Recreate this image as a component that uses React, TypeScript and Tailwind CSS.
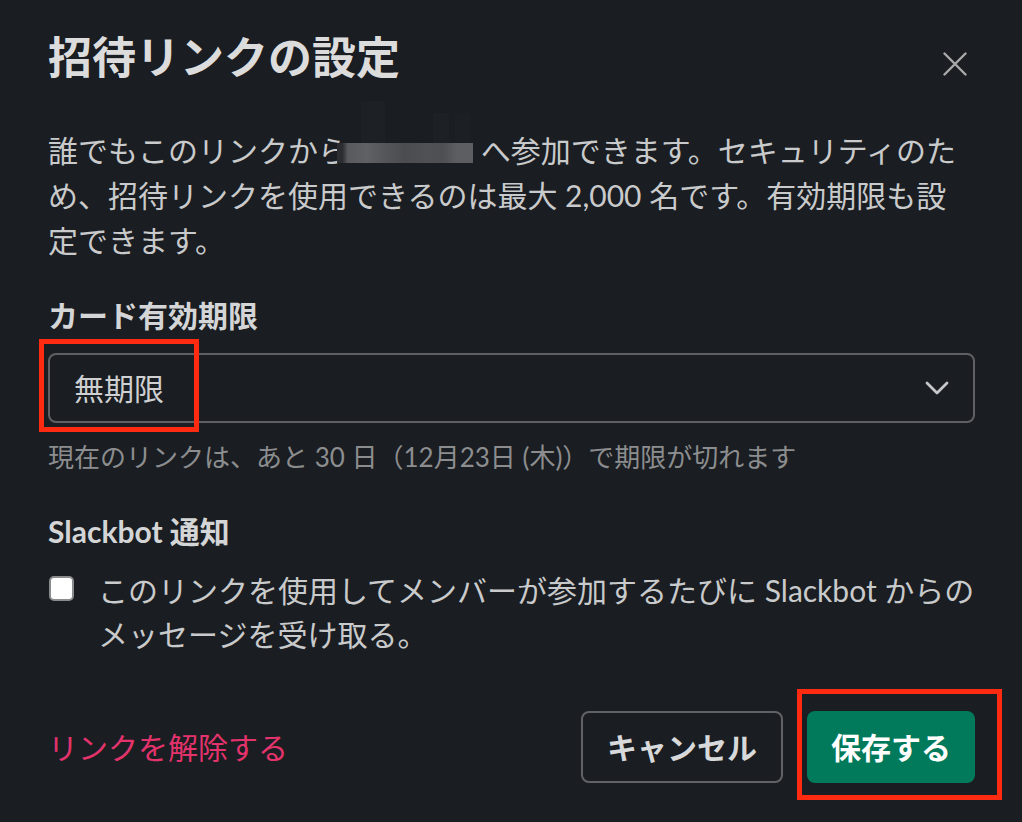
import React from "react";

const FONT = "font-['Lato','Noto_Sans_CJK_JP',sans-serif]";

export default function App() {
  return (
    <div
      className={`relative w-[1022px] h-[822px] overflow-hidden bg-[#1a1d21] pl-[48px] pr-[47px] pt-[29px] ${FONT}`}
    >
      {/* Header */}
      <div className="flex h-[56px] justify-between">
        <h1 className="text-[44px] leading-[56px] font-bold text-[#dcdcdd]">
          招待リンクの設定
        </h1>
        <svg
          className="mt-[23px] mr-[8px]"
          width="24"
          height="24"
          viewBox="0 0 24 24"
          fill="none"
          stroke="#a9aaab"
          strokeWidth="2.4"
          strokeLinecap="round"
        >
          <path d="M1.5 1.5 L22.5 22.5 M22.5 1.5 L1.5 22.5" />
        </svg>
      </div>

      {/* Description */}
      <p className="mt-[43px] text-[30px] leading-[45px] text-[#c9cacb] whitespace-nowrap">
        誰でもこのリンクから
        <span className="relative inline-block align-middle -ml-[11px] w-[136px] h-[20px] -translate-y-[1px] bg-[linear-gradient(90deg,#2b2d31_0%,#2b2d31_4%,#595a5d_8%,#606164_22%,#55565a_35%,#4b4c4f_50%,#505154_65%,#4e4f52_78%,#5d5e61_88%,#5d5e61_100%)]">
          <span className="absolute left-[24px] -top-[42px] h-[42px] w-[24px] bg-[#1d2024]" />
          <span className="absolute left-[96px] -top-[30px] h-[30px] w-[16px] bg-[#1d2024]" />
          <span className="absolute left-[118px] -top-[30px] h-[30px] w-[16px] bg-[#1c1f23]" />
        </span>{" "}
        へ参加できます。セキュリティのた
        <br />
        め、招待リンクを使用できるのは最大 2,000 名です。有効期限も設
        <br />
        定できます。
      </p>

      {/* Expiration label */}
      <div className="mt-[30px] text-[30px] leading-[44px] font-bold text-[#d4d5d6]">
        カード有効期限
      </div>

      {/* Select */}
      <div className="mt-[16px] flex h-[70px] items-center justify-between rounded-[8px] border-2 border-[#5f6063] pl-[24px] pr-[24px]">
        <span className="text-[30px] text-[#cfd0d1]">無期限</span>
        <svg
          width="24"
          height="14"
          viewBox="0 0 24 14"
          fill="none"
          stroke="#c6c7c8"
          strokeWidth="2.8"
          strokeLinecap="round"
          strokeLinejoin="round"
        >
          <path d="M2 2 L12 12 L22 2" />
        </svg>
      </div>

      {/* Hint */}
      <div className="mt-[16px] text-[26px] leading-[36px] text-[#8c8d8f]">
        現在のリンクは、あと 30 日（12月23日 (木)）で期限が切れます
      </div>

      {/* Slackbot label */}
      <div className="mt-[34px] text-[30px] leading-[44px] font-bold text-[#d4d5d6]">
        Slackbot 通知
      </div>

      {/* Checkbox row */}
      <div className="mt-[15px] flex items-start gap-[24px]">
        <div className="mt-[8px] ml-[1px] h-[25px] w-[25px] shrink-0 rounded-[5px] border-2 border-[#8a8b8d] bg-white" />
        <div className="whitespace-nowrap text-[30px] leading-[44px] text-[#c9cacb]">
          このリンクを使用してメンバーが参加するたびに Slackbot からの
          <br />
          メッセージを受け取る。
        </div>
      </div>

      {/* Footer */}
      <div className="mt-[55px] flex items-center justify-between">
        <span className="text-[30px] text-[#e3336c]">リンクを解除する</span>
        <div className="flex gap-[24px]">
          <button className="flex h-[72px] w-[202px] items-center justify-center rounded-[8px] border-2 border-[#616265] text-[30px] font-bold text-[#d8d9da]">
            キャンセル
          </button>
          <button className="flex h-[72px] w-[168px] items-center justify-center rounded-[8px] bg-[#007a5a] text-[30px] font-bold text-white">
            保存する
          </button>
        </div>
      </div>

      {/* Red annotation boxes */}
      <div className="absolute left-[39px] top-[339px] h-[93px] w-[160px] border-[5px] border-[#fe2b10]" />
      <div className="absolute left-[797px] top-[689px] h-[111px] w-[205px] border-[5px] border-[#fe2b10]" />
    </div>
  );
}
